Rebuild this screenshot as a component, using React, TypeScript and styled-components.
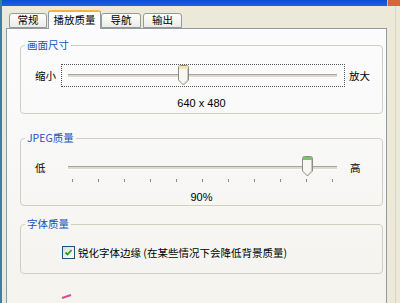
import React from 'react'
import styled, { createGlobalStyle } from 'styled-components'

const GlobalStyle = createGlobalStyle`
  html, body {
    margin: 0;
    padding: 0;
    overflow: hidden;
    background: #ece9d8;
  }
  body {
    font-family: "Liberation Sans", "Noto Sans CJK SC", sans-serif;
    font-size: 11px;
    color: #000;
  }
`

const Window = styled.div`
  width: 400px;
  height: 303px;
  display: flex;
  flex-direction: column;
  background: #ece9d8;
  border-left: 2px solid #3d7ea6;
  box-sizing: border-box;
  overflow: hidden;
`

const TitleBar = styled.div`
  height: 6px;
  flex: none;
  display: flex;
  justify-content: flex-end;
  background: linear-gradient(#0a4fd0, #1a62e6);
`

const CloseButton = styled.div`
  width: 12px;
  background: #d8643f;
  border-left: 1px solid #f2b89a;
`

const Body = styled.div`
  flex: 1;
  display: flex;
  flex-direction: column;
  padding: 4px 8px 0 4px;
  border-right: 1px solid #d8d5c6;
  margin-right: 4px;
`

const TabStrip = styled.div`
  height: 18px;
  flex: none;
  display: flex;
  align-items: flex-end;
  padding-left: 3px;
  position: relative;
  z-index: 1;
`

const Tab = styled.div<{ $active?: boolean; $w: number; $gap: number }>`
  width: ${({ $w }) => $w}px;
  height: ${({ $active }) => ($active ? '19px' : '15px')};
  margin-bottom: ${({ $active }) => ($active ? '-1px' : '0')};
  margin-right: ${({ $gap }) => $gap}px;
  display: flex;
  align-items: center;
  justify-content: center;
  box-sizing: border-box;
  border: 1px solid #919b9c;
  border-bottom: ${({ $active }) => ($active ? 'none' : '1px solid #919b9c')};
  border-top: ${({ $active }) => ($active ? '2px solid #f2b63e' : '1px solid #919b9c')};
  border-radius: 3px 3px 0 0;
  background: ${({ $active }) =>
    $active ? '#fcfcfe' : 'linear-gradient(#fefefe, #ecebe6)'};
  font-family: "Noto Sans CJK SC", sans-serif;
  font-size: 10.5px;
  line-height: 1;
  flex: none;
`

const Panel = styled.div`
  flex: 1;
  border: 1px solid #919b9c;
  border-bottom: none;
  background: linear-gradient(#fcfcfe, #f4f3ee);
  padding: 10px 3px 0 13px;
  display: flex;
  flex-direction: column;
`

const Group = styled.fieldset<{ $h: number; $gap: number }>`
  margin: 0 0 ${({ $gap }) => $gap}px 0;
  padding: 0;
  height: ${({ $h }) => $h}px;
  box-sizing: border-box;
  border: 1px solid #d0d0bf;
  border-radius: 4px;
  display: flex;
  flex-direction: column;
  min-width: 0;
  flex: none;
`

const Legend = styled.legend`
  margin-left: 4px;
  padding: 0 2px;
  color: #1a50c0;
  font-family: "Noto Sans CJK SC", sans-serif;
  font-size: 10.5px;
  line-height: 12px;
`

const SliderRow = styled.div<{ $top: number }>`
  display: flex;
  align-items: center;
  margin-top: ${({ $top }) => $top}px;
  padding-left: 14px;
`

const EndLabel = styled.span<{ $w: number; $pad?: number }>`
  width: ${({ $w }) => $w}px;
  padding-left: ${({ $pad }) => $pad ?? 0}px;
  font-family: "Noto Sans CJK SC", sans-serif;
  font-size: 10.5px;
  flex: none;
`

const SliderBox = styled.div<{ $focus?: boolean }>`
  position: relative;
  width: 284px;
  height: 23px;
  box-sizing: border-box;
  border: 1px dotted ${({ $focus }) => ($focus ? '#555' : 'transparent')};
  flex: none;
`

const Track = styled.div`
  position: absolute;
  left: 6px;
  right: 7px;
  top: 9px;
  height: 2px;
  border-top: 1px solid #a5a497;
  border-bottom: 1px solid #fff;
  background: #dcdad0;
`

const ThumbSlot = styled.div<{ $top: number }>`
  position: absolute;
  top: ${({ $top }) => $top}px;
  line-height: 0;
`

const Ticks = styled.div`
  position: absolute;
  left: 10px;
  right: 11px;
  top: 22px;
  display: flex;
  justify-content: space-between;
`

const Tick = styled.i`
  width: 1px;
  height: 3px;
  background: #8b8b80;
`

const Value = styled.div<{ $top: number }>`
  margin-top: ${({ $top }) => $top}px;
  text-align: center;
  font-size: 11px;
  font-family: "Liberation Sans", sans-serif;
`

const CheckRow = styled.label`
  display: flex;
  align-items: center;
  gap: 3px;
  margin: 15px 0 0 41px;
  font-family: "Noto Sans CJK SC", sans-serif;
  font-size: 10.5px;
`

const Box = styled.span`
  width: 11px;
  height: 11px;
  border: 1px solid #1c5180;
  background: linear-gradient(135deg, #dcdcd5, #fff);
  display: flex;
  align-items: center;
  justify-content: center;
  flex: none;
`

const CutRow = styled.div`
  margin: 18px 0 0 41px;
  display: flex;
  gap: 6px;
`

const ThumbShape = ({ cap }: { cap: string }) => (
  <svg width="11" height="21" viewBox="0 0 11 21">
    <path
      d="M0.5 2.5 Q0.5 0.5 2.5 0.5 L8.5 0.5 Q10.5 0.5 10.5 2.5 L10.5 15 L5.5 20 L0.5 15 Z"
      fill="#f7f7f4"
      stroke="#8c8c80"
    />
    <rect x="1" y="1" width="9" height="3" fill={cap} />
    <path d="M9.5 4 L9.5 15 L5.5 19" fill="none" stroke="#c9c8bd" />
  </svg>
)

const Slider = ({
  pos,
  cap,
  focus,
  ticks,
}: {
  pos: number
  cap: string
  focus?: boolean
  ticks?: number
}) => (
  <SliderBox $focus={focus}>
    <Track />
    {ticks ? (
      <Ticks>
        {Array.from({ length: ticks }).map((_, i) => (
          <Tick key={i} />
        ))}
      </Ticks>
    ) : null}
    <ThumbSlot $top={focus ? 0 : -1} style={{ left: 5 + pos * 261 }}>
      <ThumbShape cap={cap} />
    </ThumbSlot>
  </SliderBox>
)

export default function App() {
  return (
    <>
      <GlobalStyle />
      <Window>
        <TitleBar>
          <CloseButton />
        </TitleBar>
        <Body>
          <TabStrip>
            <Tab $w={38} $gap={1}>
              常规
            </Tab>
            <Tab $w={53} $gap={0} $active>
              播放质量
            </Tab>
            <Tab $w={40} $gap={2}>
              导航
            </Tab>
            <Tab $w={39} $gap={0}>
              输出
            </Tab>
          </TabStrip>
          <Panel>
            <Group $h={75} $gap={18}>
              <Legend>画面尺寸</Legend>
              <SliderRow $top={13}>
                <EndLabel $w={26}>缩小</EndLabel>
                <Slider pos={0.425} cap="#f3e3b0" focus />
                <EndLabel $w={24} $pad={4}>
                  放大
                </EndLabel>
              </SliderRow>
              <Value $top={10}>640 x 480</Value>
            </Group>
            <Group $h={74} $gap={12}>
              <Legend>JPEG质量</Legend>
              <SliderRow $top={12}>
                <EndLabel $w={26}>低</EndLabel>
                <Slider pos={0.9} cap="#7cc070" ticks={11} />
                <EndLabel $w={20} $pad={5}>
                  高
                </EndLabel>
              </SliderRow>
              <Value $top={12}>90%</Value>
            </Group>
            <Group $h={56} $gap={0}>
              <Legend>字体质量</Legend>
              <CheckRow>
                <Box>
                  <svg width="9" height="9" viewBox="0 0 9 9">
                    <path
                      d="M1.5 4.5 L3.5 6.5 L7.5 2"
                      fill="none"
                      stroke="#21a121"
                      strokeWidth="1.8"
                    />
                  </svg>
                </Box>
                锐化字体边缘 (在某些情况下会降低背景质量)
              </CheckRow>
            </Group>
            <CutRow>
              <svg width="12" height="12" viewBox="0 0 12 12">
                <path
                  d="M1 6 L10 3"
                  fill="none"
                  stroke="#d94f8c"
                  strokeWidth="2"
                />
              </svg>
            </CutRow>
          </Panel>
        </Body>
      </Window>
    </>
  )
}
